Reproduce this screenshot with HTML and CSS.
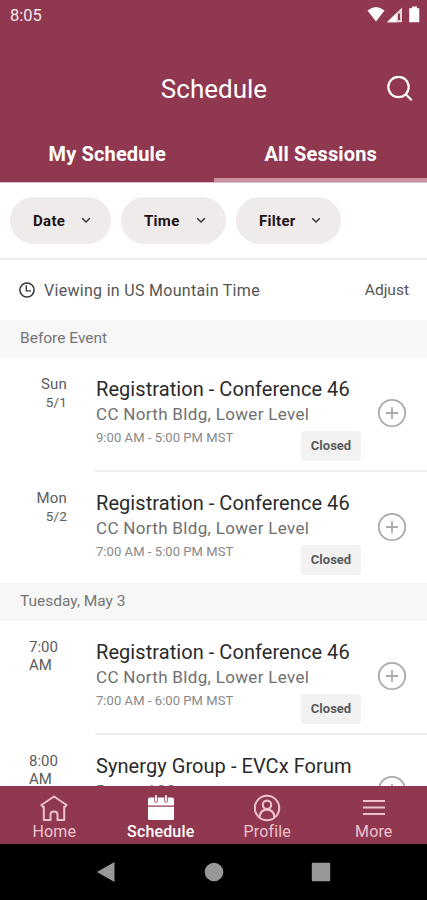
FILE: index.html
```html
<!DOCTYPE html>
<html lang="en">
<head>
  <meta charset="UTF-8">
  <meta name="viewport" content="width=device-width, initial-scale=1.0">
  <title>Schedule</title>
  <link rel="stylesheet" href="styles.css">
</head>
<body>
  <div class="app">
    <header class="header">
      <div class="status-bar">
        <span class="clock">8:05</span>
        <svg class="status-icons" width="54" height="18" viewBox="0 0 54 18">
          <path d="M0.5 4.5Q9 -2.5 17.5 4.5L9 15.5Z" fill="#fff"/>
          <path d="M20 16.2L35 1.5V16.2Z" fill="#e9d2d8"/>
          <path d="M20 16.2L29.5 7V16.2Z" fill="#fff"/>
          <path d="M31 7.5h2v6.5h-2z" fill="#8f3850"/>
          <path d="M45 0.5h5v1.8h2.3v14H42.2v-14H45z" fill="#fff"/>
        </svg>
      </div>
      <div class="title-bar">
        <h1>Schedule</h1>
        <svg class="search" width="26" height="26" viewBox="0 0 26 26" fill="none" stroke="#fff" stroke-width="2.2">
          <circle cx="11.5" cy="11" r="10.2"/>
          <path d="M18.8 18.3L24.7 24.2"/>
        </svg>
      </div>
      <div class="tabs">
        <div class="tab">My Schedule</div>
        <div class="tab active">All Sessions</div>
      </div>
    </header>

    <div class="filters">
      <button class="pill date">Date <svg width="10" height="7" viewBox="0 0 10 7"><path d="M1.2 1.2L5 5L8.8 1.2"/></svg></button>
      <button class="pill time">Time <svg width="10" height="7" viewBox="0 0 10 7"><path d="M1.2 1.2L5 5L8.8 1.2"/></svg></button>
      <button class="pill filter">Filter <svg width="10" height="7" viewBox="0 0 10 7"><path d="M1.2 1.2L5 5L8.8 1.2"/></svg></button>
    </div>

    <div class="timezone">
      <svg width="16" height="16" viewBox="0 0 16 16" fill="none" stroke="#333" stroke-width="1.5">
        <circle cx="8" cy="8" r="7.1"/>
        <path d="M7.3 3.2V8.8H12" stroke-width="1.3"/>
      </svg>
      <span class="zone">Viewing in US Mountain Time</span>
      <span class="adjust">Adjust</span>
    </div>

    <main class="sessions">
      <h2 class="section">Before Event</h2>
      <div class="session">
        <div class="when day">Sun<small>5/1</small></div>
        <div class="details">
          <div class="info">
            <h3>Registration - Conference 46</h3>
            <p class="place">CC North Bldg, Lower Level</p>
            <p class="hours">9:00 AM - 5:00 PM MST</p>
            <span class="badge">Closed</span>
          </div>
          <svg class="add" width="30" height="30" viewBox="0 0 30 30"><circle cx="15" cy="15" r="13.2"/><path d="M15 9v12M9 15h12"/></svg>
        </div>
      </div>
      <div class="session">
        <div class="when day">Mon<small>5/2</small></div>
        <div class="details last">
          <div class="info">
            <h3>Registration - Conference 46</h3>
            <p class="place">CC North Bldg, Lower Level</p>
            <p class="hours">7:00 AM - 5:00 PM MST</p>
            <span class="badge">Closed</span>
          </div>
          <svg class="add" width="30" height="30" viewBox="0 0 30 30"><circle cx="15" cy="15" r="13.2"/><path d="M15 9v12M9 15h12"/></svg>
        </div>
      </div>

      <h2 class="section">Tuesday, May 3</h2>
      <div class="session">
        <div class="when">7:00<br>AM</div>
        <div class="details">
          <div class="info">
            <h3>Registration - Conference 46</h3>
            <p class="place">CC North Bldg, Lower Level</p>
            <p class="hours">7:00 AM - 6:00 PM MST</p>
            <span class="badge">Closed</span>
          </div>
          <svg class="add" width="30" height="30" viewBox="0 0 30 30"><circle cx="15" cy="15" r="13.2"/><path d="M15 9v12M9 15h12"/></svg>
        </div>
      </div>
      <div class="session">
        <div class="when">8:00<br>AM</div>
        <div class="details">
          <div class="info">
            <h3>Synergy Group - EVCx Forum</h3>
            <p class="place">Room 133</p>
          </div>
          <svg class="add" width="30" height="30" viewBox="0 0 30 30"><circle cx="15" cy="15" r="13.2"/><path d="M15 9v12M9 15h12"/></svg>
        </div>
      </div>
    </main>

    <nav class="bottom-nav">
      <a class="nav-item">
        <svg width="28" height="28" viewBox="0 0 28 28" fill="none" stroke="currentColor" stroke-width="2" stroke-linejoin="round" stroke-linecap="round">
          <path d="M1.4 11L14 2.5L26.6 11L25 12.8H24.2V26H17.5V20.5Q17.5 17.5 14 17.5Q10.5 17.5 10.5 20.5V26H3.8V12.8H3Z"/>
        </svg>
        <span>Home</span>
      </a>
      <a class="nav-item active">
        <svg width="28" height="28" viewBox="0 0 28 28" fill="currentColor">
          <path d="M1 11.4V5.5Q1 3.5 3 3.5H25Q27 3.5 27 5.5V11.4Z"/>
          <path d="M1 12.7H27V24.5Q27 26 25.5 26H2.5Q1 26 1 24.5Z"/>
          <path d="M9 3V7M19 3V7" stroke="#8f3850" stroke-width="3.4" stroke-linecap="round"/>
          <path d="M9 2V7M19 2V7" stroke="currentColor" stroke-width="1.8" stroke-linecap="round"/>
        </svg>
        <span>Schedule</span>
      </a>
      <a class="nav-item">
        <svg width="28" height="28" viewBox="0 0 28 28" fill="none" stroke="currentColor" stroke-width="2.1">
          <circle cx="14" cy="14" r="12.2"/>
          <circle cx="14" cy="10.8" r="4.2"/>
          <path d="M6.6 23.5Q7 15.6 14 15.6Q21 15.6 21.4 23.5"/>
        </svg>
        <span>Profile</span>
      </a>
      <a class="nav-item">
        <svg width="28" height="28" viewBox="0 0 28 28" fill="none" stroke="currentColor" stroke-width="2">
          <path d="M3 7h22M3 13.5h22M3 20h22"/>
        </svg>
        <span>More</span>
      </a>
    </nav>

    <div class="system-nav">
      <svg width="20" height="20" viewBox="0 0 20 20"><path d="M1 10L18.5 0V20Z"/></svg>
      <svg width="20" height="20" viewBox="0 0 20 20"><circle cx="10" cy="10" r="9.3"/></svg>
      <svg width="20" height="20" viewBox="0 0 20 20"><rect x="0.8" y="0.8" width="18.4" height="18.4" rx="1"/></svg>
    </div>
  </div>
</body>
</html>
```
FILE: styles.css
```css
* {
  box-sizing: border-box;
}
body {
  font-family: Roboto, "Liberation Sans", sans-serif;
  background-color: #fff;
  margin: 0;
}
h1, h2, h3, p {
  margin: 0;
  font-weight: 400;
}
.app {
  width: 427px;
  height: 900px;
  display: flex;
  flex-direction: column;
  overflow: hidden;
  white-space: nowrap;
}

/* Header */
.header {
  height: 183px;
  flex: none;
  display: flex;
  flex-direction: column;
  background-color: #8f3850;
  border-bottom: 1px solid #d9c1c8;
  color: #fff;
}
.status-bar {
  height: 58px;
  padding: 6px 6px 0 10px;
  display: flex;
  justify-content: space-between;
}
.clock {
  font-size: 16.5px;
  line-height: 19px;
  color: #f8e9ed;
}
.title-bar {
  height: 62px;
  display: grid;
  grid-template-columns: 1fr auto 1fr;
  align-items: center;
  padding-right: 14px;
  padding-left: 15px;
}
.title-bar h1 {
  grid-column: 2;
  font-size: 26px;
  line-height: 30px;
}
.search {
  justify-self: end;
}
.tabs {
  flex: 1;
  display: flex;
}
.tab {
  flex: 1;
  padding: 22px 0 0 1px;
  font-size: 20px;
  line-height: 24px;
  font-weight: 700;
  letter-spacing: 0.15px;
  text-align: center;
}
.tab.active {
  border-bottom: 4px solid #ca929f;
}

/* Filters */
.filters {
  height: 77px;
  flex: none;
  display: flex;
  gap: 10px;
  padding: 14px 10px 0;
  border-bottom: 2px solid #ededed;
}
.pill {
  height: 47px;
  display: flex;
  align-items: center;
  justify-content: space-between;
  padding: 0 20px 0 23px;
  border: none;
  border-radius: 24px;
  background-color: #efebea;
  font-family: inherit;
  font-size: 15px;
  font-weight: 700;
  letter-spacing: 0.3px;
  color: #1d1114;
}
.pill svg {
  fill: none;
  stroke: #3a3234;
  stroke-width: 1.4;
}
.date {
  width: 101px;
}
.time {
  width: 105px;
}
.filter {
  width: 105px;
}

/* Time zone */
.timezone {
  height: 60px;
  flex: none;
  display: flex;
  align-items: center;
  padding: 0 18px 0 19px;
  font-size: 16px;
  color: #555;
}
.zone {
  margin-left: 9px;
  letter-spacing: 0.3px;
}
.adjust {
  margin-left: auto;
  font-size: 15.5px;
}

/* Sessions */
.sessions {
  flex: 1;
  min-height: 0;
  overflow: hidden;
}
.section {
  height: 38px;
  padding-left: 20px;
  background-color: #f7f7f7;
  font-size: 15.5px;
  line-height: 37px;
  color: #757575;
}
.session {
  display: flex;
}
.when {
  width: 95px;
  padding: 18px 0 0 29px;
  font-size: 15px;
  line-height: 17.5px;
  color: #5c5c5c;
}
.when.day {
  padding: 18px 28px 0 0;
  text-align: right;
  letter-spacing: 0.2px;
}
.when small {
  display: block;
  font-size: 13.5px;
  line-height: 16px;
}
.details {
  flex: 1;
  height: 114px;
  display: flex;
  justify-content: space-between;
  padding: 18px 20px 0 1px;
  border-bottom: 2px solid #efefef;
}
.details.last {
  height: 111px;
  border-bottom: none;
}
.info {
  width: 265px;
  display: flex;
  flex-direction: column;
}
.info h3 {
  font-size: 20px;
  line-height: 26px;
  letter-spacing: 0.06px;
  color: #2a2a2a;
}
.place {
  font-size: 17px;
  line-height: 24px;
  letter-spacing: 0.32px;
  color: #707070;
}
.hours {
  font-size: 13px;
  line-height: 24px;
  letter-spacing: 0.06px;
  color: #888;
}
.badge {
  align-self: flex-end;
  width: 60px;
  height: 30px;
  margin-top: -19px;
  border-radius: 4px;
  background-color: #f2f2f3;
  font-size: 13px;
  line-height: 29px;
  font-weight: 700;
  text-align: center;
  color: #5a5a5a;
}
.add {
  margin-top: 22px;
  fill: none;
  stroke: #aaa;
  stroke-width: 1.8;
}

/* Bottom navigation */
.bottom-nav {
  height: 58px;
  flex: none;
  display: flex;
  padding-left: 1px;
  background-color: #8f3850;
}
.nav-item {
  flex: 1;
  display: flex;
  flex-direction: column;
  align-items: center;
  padding-top: 8px;
  font-size: 16px;
  line-height: 20px;
  letter-spacing: 0.15px;
  color: #ecc3cd;
}
.nav-item.active {
  color: #fff;
  font-weight: 500;
}

.system-nav {
  height: 56px;
  flex: none;
  display: flex;
  align-items: center;
  justify-content: space-between;
  padding: 0 96px;
  background-color: #000;
  fill: #989898;
}
```
